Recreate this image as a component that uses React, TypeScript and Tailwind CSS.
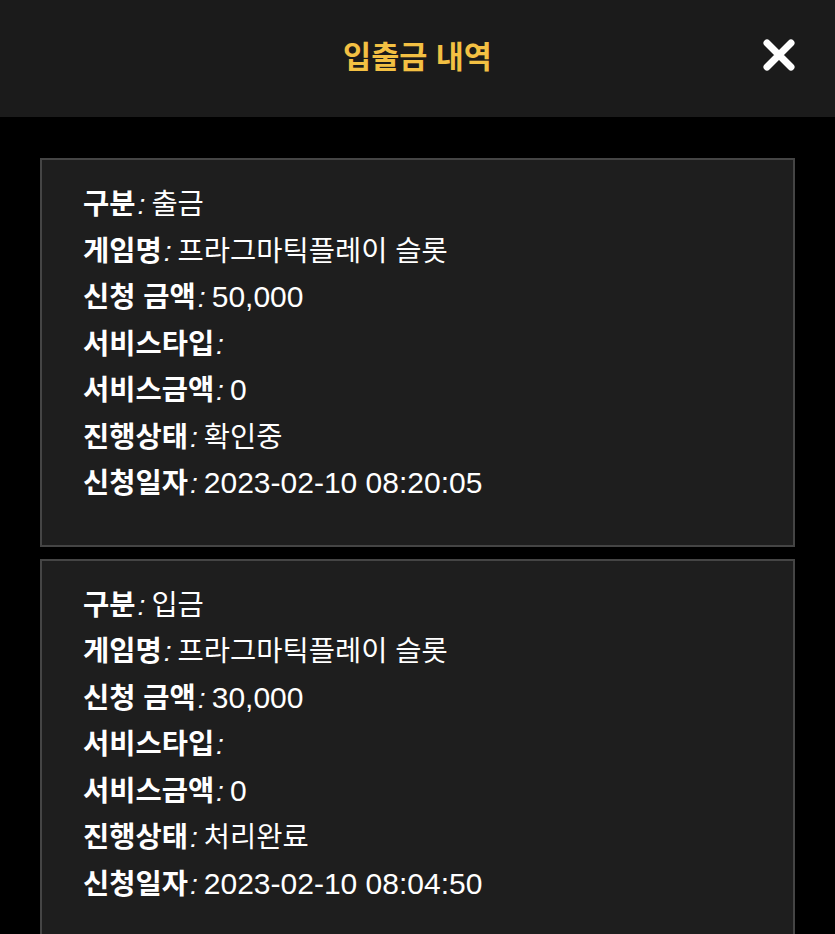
import { Fragment } from "react";

type Row = { label: string; value: string; num?: boolean };

const records: Row[][] = [
  [
    { label: "구분", value: "출금" },
    { label: "게임명", value: "프라그마틱플레이 슬롯" },
    { label: "신청 금액", value: "50,000", num: true },
    { label: "서비스타입", value: "" },
    { label: "서비스금액", value: "0", num: true },
    { label: "진행상태", value: "확인중" },
    { label: "신청일자", value: "2023-02-10 08:20:05", num: true },
  ],
  [
    { label: "구분", value: "입금" },
    { label: "게임명", value: "프라그마틱플레이 슬롯" },
    { label: "신청 금액", value: "30,000", num: true },
    { label: "서비스타입", value: "" },
    { label: "서비스금액", value: "0", num: true },
    { label: "진행상태", value: "처리완료" },
    { label: "신청일자", value: "2023-02-10 08:04:50", num: true },
  ],
];

function CloseIcon() {
  return (
    <svg width="36" height="36" viewBox="0 0 36 36" aria-hidden>
      <path
        d="M6 6 L30 30 M30 6 L6 30"
        stroke="#fff"
        strokeWidth="7"
        strokeLinecap="round"
      />
    </svg>
  );
}

export default function App() {
  return (
    <div
      className="min-h-[934px] bg-black text-white"
      style={{ fontFamily: '"Liberation Sans", "Noto Sans CJK KR", sans-serif' }}
    >
      <header className="relative flex h-[117px] items-center justify-center bg-[#1b1b1b]">
        <h1 className="pb-[2px] text-[30.5px] font-bold text-[#f3c043]">입출금 내역</h1>
        <button type="button" className="absolute right-[38px] top-[37px]">
          <CloseIcon />
        </button>
      </header>

      <main className="flex flex-col gap-3 px-10 pt-[41px]">
        {records.map((rows, i) => (
          <div
            key={i}
            className="border-2 border-[#454545] bg-[#1e1e1e] pb-[38px] pl-[41px] pt-[21px]"
          >
            {rows.map((r) => (
              <Fragment key={r.label}>
                <p className="h-[46.5px] text-[28.5px] leading-[46.5px]">
                  <span className="font-bold">{r.label}</span>
                  <i className="ml-[2px] mr-[6px]">:</i>
                  <span className={r.num ? "text-[30px]" : ""}>{r.value}</span>
                </p>
              </Fragment>
            ))}
          </div>
        ))}
      </main>
    </div>
  );
}
